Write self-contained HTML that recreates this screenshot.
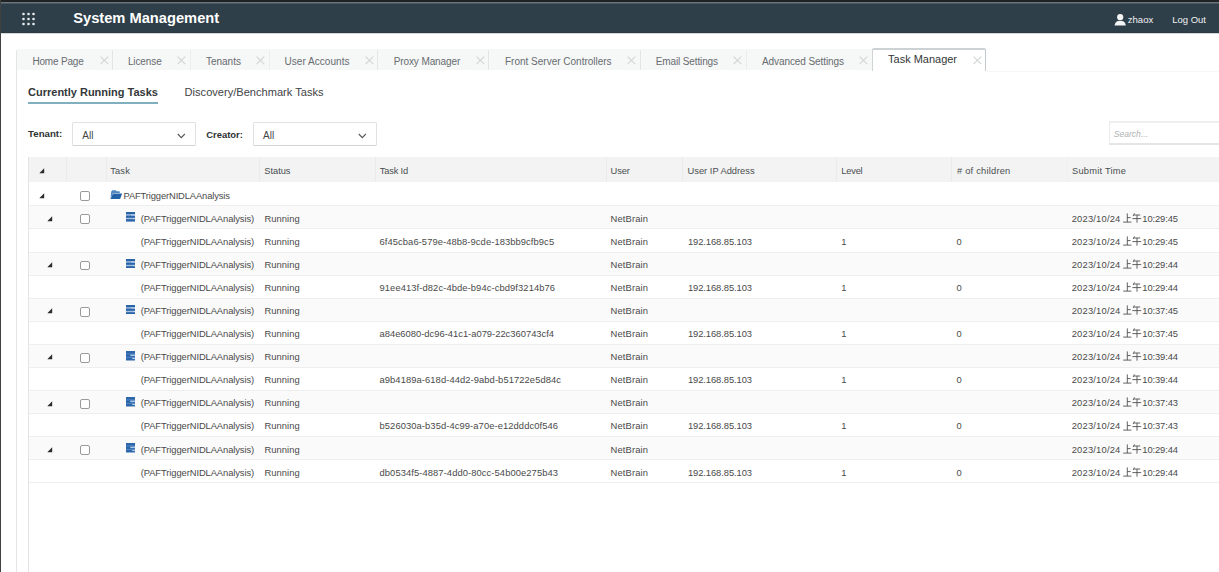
<!DOCTYPE html>
<html><head><meta charset="utf-8"><style>
html,body{margin:0;padding:0;width:1219px;height:572px;overflow:hidden;background:#fff}
.t{position:absolute;white-space:nowrap;line-height:1;font-family:"Liberation Sans",sans-serif}
.r{position:absolute}
</style></head><body>
<div class="r" style="left:0px;top:0px;width:1219px;height:2px;background:#212223;"></div>
<div class="r" style="left:0px;top:2px;width:1219px;height:1px;background:#6a767b;"></div>
<div class="r" style="left:0px;top:3px;width:1219px;height:1px;background:#4b5960;"></div>
<div class="r" style="left:0px;top:4px;width:1219px;height:29px;background:#2f3f49;"></div>
<div class="r" style="left:0px;top:32px;width:1219px;height:1px;background:#2c3a42;"></div>
<div class="r" style="left:0px;top:33px;width:1219px;height:1px;background:#d3d8db;"></div>
<div class="r" style="left:0px;top:0px;width:1.2px;height:572px;background:#424242;"></div>
<svg class="r" style="left:0;top:0" width="60" height="34"><circle cx="23.5" cy="14" r="1.3" fill="#e9edef"/><circle cx="23.5" cy="19" r="1.3" fill="#e9edef"/><circle cx="23.5" cy="24" r="1.3" fill="#e9edef"/><circle cx="28.5" cy="14" r="1.3" fill="#e9edef"/><circle cx="28.5" cy="19" r="1.3" fill="#e9edef"/><circle cx="28.5" cy="24" r="1.3" fill="#e9edef"/><circle cx="33.5" cy="14" r="1.3" fill="#e9edef"/><circle cx="33.5" cy="19" r="1.3" fill="#e9edef"/><circle cx="33.5" cy="24" r="1.3" fill="#e9edef"/></svg>
<div class="t" style="left:73.20px;top:10.77px;font-size:14.68px;color:#ffffff;font-weight:bold;">System Management</div>
<svg class="r" style="left:1114px;top:14px" width="13" height="12" viewBox="0 0 13 12"><circle cx="6.2" cy="3.2" r="3.1" fill="#f2f4f5"/><path d="M0.6 11.6 C0.8 8.4 2.6 7.0 4.4 6.9 L8.0 6.9 C9.8 7.0 11.6 8.4 11.8 11.6 Z" fill="#f2f4f5"/></svg>
<div class="t" style="left:1127.80px;top:15.34px;font-size:9.52px;color:#f0f2f3;">zhaox</div>
<div class="t" style="left:1172.30px;top:15.38px;font-size:9.47px;color:#f0f2f3;">Log Out</div>
<div class="r" style="left:16.4px;top:48.6px;width:969px;height:21.6px;background:#f6f7f7;border-top-left-radius:3px;"></div>
<div class="r" style="left:16.4px;top:49.5px;width:1px;height:21px;background:#e3e5e6;"></div>
<div class="r" style="left:112.4px;top:49.5px;width:1px;height:20.5px;background:#e3e5e6;"></div>
<div class="r" style="left:377.4px;top:49.5px;width:1px;height:20.5px;background:#e3e5e6;"></div>
<div class="r" style="left:488.3px;top:49.5px;width:1px;height:20.5px;background:#e3e5e6;"></div>
<div class="r" style="left:639.5px;top:49.5px;width:1px;height:20.5px;background:#e3e5e6;"></div>
<div class="r" style="left:189.9px;top:49.5px;width:1px;height:20.5px;background:#eceeee;"></div>
<div class="r" style="left:268.5px;top:49.5px;width:1px;height:20.5px;background:#eceeee;"></div>
<div class="r" style="left:745.6px;top:49.5px;width:1px;height:20.5px;background:#eceeee;"></div>
<div class="t" style="left:32.40px;top:56.73px;font-size:10.0px;color:#686c6f;letter-spacing:-0.177px;">Home Page</div>
<svg class="r" style="left:99.6px;top:56.3px" width="9" height="9" viewBox="0 0 9 9"><path d="M0.6 0.6 L8.2 8.2 M8.2 0.6 L0.6 8.2" stroke="#d3d5d6" stroke-width="1.15"/></svg>
<div class="t" style="left:127.90px;top:56.73px;font-size:10.0px;color:#686c6f;letter-spacing:-0.111px;">License</div>
<svg class="r" style="left:176.6px;top:56.3px" width="9" height="9" viewBox="0 0 9 9"><path d="M0.6 0.6 L8.2 8.2 M8.2 0.6 L0.6 8.2" stroke="#d3d5d6" stroke-width="1.15"/></svg>
<div class="t" style="left:206.00px;top:56.73px;font-size:10.0px;color:#686c6f;letter-spacing:-0.022px;">Tenants</div>
<svg class="r" style="left:255.8px;top:56.3px" width="9" height="9" viewBox="0 0 9 9"><path d="M0.6 0.6 L8.2 8.2 M8.2 0.6 L0.6 8.2" stroke="#d3d5d6" stroke-width="1.15"/></svg>
<div class="t" style="left:284.50px;top:56.73px;font-size:10.0px;color:#686c6f;letter-spacing:0.043px;">User Accounts</div>
<svg class="r" style="left:365.0px;top:56.3px" width="9" height="9" viewBox="0 0 9 9"><path d="M0.6 0.6 L8.2 8.2 M8.2 0.6 L0.6 8.2" stroke="#d3d5d6" stroke-width="1.15"/></svg>
<div class="t" style="left:393.70px;top:56.73px;font-size:10.0px;color:#686c6f;letter-spacing:-0.101px;">Proxy Manager</div>
<svg class="r" style="left:475.6px;top:56.3px" width="9" height="9" viewBox="0 0 9 9"><path d="M0.6 0.6 L8.2 8.2 M8.2 0.6 L0.6 8.2" stroke="#d3d5d6" stroke-width="1.15"/></svg>
<div class="t" style="left:505.00px;top:56.73px;font-size:10.0px;color:#686c6f;letter-spacing:-0.004px;">Front Server Controllers</div>
<svg class="r" style="left:626.8px;top:56.3px" width="9" height="9" viewBox="0 0 9 9"><path d="M0.6 0.6 L8.2 8.2 M8.2 0.6 L0.6 8.2" stroke="#d3d5d6" stroke-width="1.15"/></svg>
<div class="t" style="left:655.80px;top:56.73px;font-size:10.0px;color:#686c6f;letter-spacing:-0.132px;">Email Settings</div>
<svg class="r" style="left:732.8px;top:56.3px" width="9" height="9" viewBox="0 0 9 9"><path d="M0.6 0.6 L8.2 8.2 M8.2 0.6 L0.6 8.2" stroke="#d3d5d6" stroke-width="1.15"/></svg>
<div class="t" style="left:762.00px;top:56.73px;font-size:10.0px;color:#686c6f;letter-spacing:-0.087px;">Advanced Settings</div>
<svg class="r" style="left:859.2px;top:56.3px" width="9" height="9" viewBox="0 0 9 9"><path d="M0.6 0.6 L8.2 8.2 M8.2 0.6 L0.6 8.2" stroke="#d3d5d6" stroke-width="1.15"/></svg>
<div class="r" style="left:872px;top:48px;width:114px;height:23px;background:#ffffff;"></div>
<div class="r" style="left:872px;top:48px;width:113.5px;height:2px;background:#ccd1d4;border-top-left-radius:2px;border-top-right-radius:2px;"></div>
<div class="r" style="left:872px;top:49px;width:1px;height:22px;background:#cfd4d7;"></div>
<div class="r" style="left:984.8px;top:49px;width:1.5px;height:21.5px;background:#c3c9cc;"></div>
<div class="t" style="left:888.10px;top:54.11px;font-size:10.97px;color:#333638;">Task Manager</div>
<svg class="r" style="left:972.6px;top:56.2px" width="9" height="9" viewBox="0 0 9 9"><path d="M0.6 0.6 L8.2 8.2 M8.2 0.6 L0.6 8.2" stroke="#d3d5d6" stroke-width="1.15"/></svg>
<div class="r" style="left:986px;top:70.5px;width:233px;height:1px;background:#f6f6f6;"></div>
<div class="r" style="left:16.3px;top:70px;width:1px;height:502px;background:#e5e5e5;"></div>
<div class="t" style="left:28.10px;top:87.00px;font-size:10.99px;color:#33373a;font-weight:bold;">Currently Running Tasks</div>
<div class="r" style="left:28px;top:101.6px;width:130.2px;height:2px;background:#80afbd;"></div>
<div class="t" style="left:184.60px;top:87.11px;font-size:11.09px;color:#3f4346;">Discovery/Benchmark Tasks</div>
<div class="t" style="left:28.10px;top:129.41px;font-size:9.67px;color:#2d3134;font-weight:bold;">Tenant:</div>
<div class="r" style="left:72.1px;top:122.4px;width:123.6px;height:23.4px;background:#fff;box-sizing:border-box;border:1px solid #e0e1e2;border-bottom-color:#d2d4d5;border-radius:1.5px;"></div>
<div class="t" style="left:82.30px;top:130.94px;font-size:9.99px;color:#444;">All</div>
<svg class="r" style="left:176.9px;top:132.8px" width="9" height="6" viewBox="0 0 9 6"><path d="M0.8 1 L4.3 4.6 L7.8 1" stroke="#555" stroke-width="1.1" fill="none"/></svg>
<div class="t" style="left:206.20px;top:129.61px;font-size:9.44px;color:#2d3134;font-weight:bold;">Creator:</div>
<div class="r" style="left:253.2px;top:122.4px;width:123.4px;height:23.4px;background:#fff;box-sizing:border-box;border:1px solid #e0e1e2;border-bottom-color:#d2d4d5;border-radius:1.5px;"></div>
<div class="t" style="left:263.10px;top:130.94px;font-size:9.99px;color:#444;">All</div>
<svg class="r" style="left:357.8px;top:132.8px" width="9" height="6" viewBox="0 0 9 6"><path d="M0.8 1 L4.3 4.6 L7.8 1" stroke="#555" stroke-width="1.1" fill="none"/></svg>
<div class="r" style="left:1108.8px;top:121.1px;width:120px;height:24.3px;background:#fff;box-sizing:border-box;border:1px solid #ebebeb;border-top:2px solid #efefef;border-bottom:2px solid #e5e5e5;"></div>
<div class="t" style="left:1113.80px;top:130.46px;font-size:8.55px;color:#b0b2b4;font-style:italic;">Search...</div>
<div class="r" style="left:28.3px;top:157.2px;width:1190.7px;height:24.5px;background:#f3f3f3;"></div>
<div class="r" style="left:66.2px;top:157.2px;width:1px;height:24.5px;background:#ebebeb;"></div>
<div class="r" style="left:106.0px;top:157.2px;width:1px;height:24.5px;background:#ebebeb;"></div>
<div class="r" style="left:259.4px;top:157.2px;width:1px;height:24.5px;background:#ebebeb;"></div>
<div class="r" style="left:374.5px;top:157.2px;width:1px;height:24.5px;background:#ebebeb;"></div>
<div class="r" style="left:605.6px;top:157.2px;width:1px;height:24.5px;background:#ebebeb;"></div>
<div class="r" style="left:682.2px;top:157.2px;width:1px;height:24.5px;background:#ebebeb;"></div>
<div class="r" style="left:836.4px;top:157.2px;width:1px;height:24.5px;background:#ebebeb;"></div>
<div class="r" style="left:951.3px;top:157.2px;width:1px;height:24.5px;background:#ebebeb;"></div>
<div class="r" style="left:1066.9px;top:157.2px;width:1px;height:24.5px;background:#efefef;"></div>
<svg class="r" style="left:38.8px;top:168.0px" width="6" height="6" viewBox="0 0 6 6"><path d="M5.2 0.3 L5.2 5.2 L0.3 5.2 Z" fill="#2b2b2b"/></svg>
<div class="t" style="left:110.30px;top:167.13px;font-size:9.3px;color:#4a4e51;letter-spacing:0.125px;">Task</div>
<div class="t" style="left:264.30px;top:167.13px;font-size:9.3px;color:#4a4e51;letter-spacing:-0.032px;">Status</div>
<div class="t" style="left:379.80px;top:167.13px;font-size:9.3px;color:#4a4e51;letter-spacing:-0.176px;">Task Id</div>
<div class="t" style="left:610.50px;top:167.13px;font-size:9.3px;color:#4a4e51;letter-spacing:-0.080px;">User</div>
<div class="t" style="left:687.60px;top:167.13px;font-size:9.3px;color:#4a4e51;letter-spacing:-0.001px;">User IP Address</div>
<div class="t" style="left:841.30px;top:167.13px;font-size:9.3px;color:#4a4e51;letter-spacing:-0.209px;">Level</div>
<div class="t" style="left:957.00px;top:167.13px;font-size:9.3px;color:#4a4e51;letter-spacing:0.220px;"># of children</div>
<div class="t" style="left:1072.00px;top:167.13px;font-size:9.3px;color:#4a4e51;letter-spacing:0.223px;">Submit Time</div>
<div class="r" style="left:29.3px;top:181.7px;width:1189.7px;height:23.700000000000017px;background:#ffffff;"></div>
<div class="r" style="left:29.3px;top:205.4px;width:1189.7px;height:1px;background:#eeeeee;"></div>
<svg class="r" style="left:38.8px;top:192.8px" width="6" height="6" viewBox="0 0 6 6"><path d="M5.2 0.3 L5.2 5.2 L0.3 5.2 Z" fill="#2b2b2b"/></svg>
<div class="r" style="left:80.1px;top:191.30px;width:9.6px;height:9.8px;box-sizing:border-box;border:1px solid #9a9a9a;border-radius:2px;background:#fff"></div>
<svg class="r" style="left:109.6px;top:189.90px" width="12.5" height="10" viewBox="0 0 12.5 10"><path d="M0.5 9.0 L1.2 1.6 Q1.3 0.9 1.9 0.9 L2.1 0.2 L6.0 0.2 L6.5 1.2 L9.6 1.2 L9.9 3.0 L3.0 3.0 Z" fill="#5088c4"/><path d="M3.0 3.5 L12.2 3.5 L10.1 9.1 L0.5 9.1 Z" fill="#2463a7"/></svg>
<div class="t" style="left:123.50px;top:190.64px;font-size:9.4px;color:#4a4a4a;letter-spacing:-0.137px;">PAFTriggerNIDLAAnalysis</div>
<div class="r" style="left:29.3px;top:206.40000000000003px;width:1189.7px;height:22.079999999999984px;background:#fafafa;"></div>
<div class="r" style="left:29.3px;top:228.48000000000002px;width:1189.7px;height:1px;background:#eeeeee;"></div>
<svg class="r" style="left:46.5px;top:215.88000000000002px" width="6" height="6" viewBox="0 0 6 6"><path d="M5.2 0.3 L5.2 5.2 L0.3 5.2 Z" fill="#2b2b2b"/></svg>
<div class="r" style="left:80.1px;top:214.48px;width:9.6px;height:9.8px;box-sizing:border-box;border:1px solid #9a9a9a;border-radius:2px;background:#fff"></div>
<svg class="r" style="left:125.5px;top:212.48px" width="9.5" height="9.6" viewBox="0 0 9.5 9.6"><rect x="0" y="0" width="9.4" height="9.5" fill="#a4bfe0"/><rect x="0" y="0" width="9.4" height="2.2" fill="#2a64a8"/><rect x="0" y="3.6" width="9.4" height="2.2" fill="#2a64a8"/><rect x="0" y="7.2" width="9.4" height="2.3" fill="#2a64a8"/><rect x="5.2" y="2.4" width="4.2" height="1.15" fill="#b9d0ea"/><rect x="6.8" y="5.95" width="2.6" height="1.15" fill="#b9d0ea"/></svg>
<div class="t" style="left:140.70px;top:213.72px;font-size:9.4px;color:#4a4a4a;letter-spacing:-0.090px;">(PAFTriggerNIDLAAnalysis)</div>
<div class="t" style="left:264.40px;top:213.72px;font-size:9.4px;color:#4a4a4a;letter-spacing:0.077px;">Running</div>
<div class="t" style="left:610.60px;top:213.72px;font-size:9.4px;color:#4a4a4a;letter-spacing:0.131px;">NetBrain</div>
<div class="t" style="left:1071.70px;top:213.72px;font-size:9.4px;color:#4a4a4a;letter-spacing:0.186px;">2023/10/24</div>
<svg class="r" style="left:1123.00px;top:212.78px" width="19" height="10" viewBox="0 0 19 10"><g stroke="#505050" stroke-width="0.9" fill="none"><path d="M4.3 0.4 V9.1 M4.3 4.6 H7.6 M0.2 9.1 H8.4"/><path d="M11.4 0.3 L10.2 3.0 M10.9 2.0 H17.2 M9.4 5.6 H18.2 M14.0 2.0 V9.7"/></g></svg>
<div class="t" style="left:1142.30px;top:213.72px;font-size:9.4px;color:#4a4a4a;letter-spacing:-0.114px;">10:29:45</div>
<div class="r" style="left:29.3px;top:229.48000000000002px;width:1189.7px;height:22.079999999999984px;background:#ffffff;"></div>
<div class="r" style="left:29.3px;top:251.56px;width:1189.7px;height:1px;background:#eeeeee;"></div>
<div class="t" style="left:140.70px;top:236.80px;font-size:9.4px;color:#4a4a4a;letter-spacing:-0.090px;">(PAFTriggerNIDLAAnalysis)</div>
<div class="t" style="left:264.40px;top:236.80px;font-size:9.4px;color:#4a4a4a;letter-spacing:0.077px;">Running</div>
<div class="t" style="left:379.50px;top:236.80px;font-size:9.4px;color:#4a4a4a;letter-spacing:0.074px;">6f45cba6-579e-48b8-9cde-183bb9cfb9c5</div>
<div class="t" style="left:610.60px;top:236.80px;font-size:9.4px;color:#4a4a4a;letter-spacing:0.131px;">NetBrain</div>
<div class="t" style="left:687.90px;top:236.80px;font-size:9.4px;color:#4a4a4a;letter-spacing:-0.075px;">192.168.85.103</div>
<div class="t" style="left:841.20px;top:236.80px;font-size:9.4px;color:#4a4a4a;">1</div>
<div class="t" style="left:956.50px;top:236.80px;font-size:9.4px;color:#4a4a4a;">0</div>
<div class="t" style="left:1071.70px;top:236.80px;font-size:9.4px;color:#4a4a4a;letter-spacing:0.186px;">2023/10/24</div>
<svg class="r" style="left:1123.00px;top:235.86px" width="19" height="10" viewBox="0 0 19 10"><g stroke="#505050" stroke-width="0.9" fill="none"><path d="M4.3 0.4 V9.1 M4.3 4.6 H7.6 M0.2 9.1 H8.4"/><path d="M11.4 0.3 L10.2 3.0 M10.9 2.0 H17.2 M9.4 5.6 H18.2 M14.0 2.0 V9.7"/></g></svg>
<div class="t" style="left:1142.30px;top:236.80px;font-size:9.4px;color:#4a4a4a;letter-spacing:-0.114px;">10:29:45</div>
<div class="r" style="left:29.3px;top:252.56px;width:1189.7px;height:22.079999999999984px;background:#fafafa;"></div>
<div class="r" style="left:29.3px;top:274.64px;width:1189.7px;height:1px;background:#eeeeee;"></div>
<svg class="r" style="left:46.5px;top:262.03999999999996px" width="6" height="6" viewBox="0 0 6 6"><path d="M5.2 0.3 L5.2 5.2 L0.3 5.2 Z" fill="#2b2b2b"/></svg>
<div class="r" style="left:80.1px;top:260.64px;width:9.6px;height:9.8px;box-sizing:border-box;border:1px solid #9a9a9a;border-radius:2px;background:#fff"></div>
<svg class="r" style="left:125.5px;top:258.64px" width="9.5" height="9.6" viewBox="0 0 9.5 9.6"><rect x="0" y="0" width="9.4" height="9.5" fill="#a4bfe0"/><rect x="0" y="0" width="9.4" height="2.2" fill="#2a64a8"/><rect x="0" y="3.6" width="9.4" height="2.2" fill="#2a64a8"/><rect x="0" y="7.2" width="9.4" height="2.3" fill="#2a64a8"/><rect x="5.2" y="2.4" width="4.2" height="1.15" fill="#b9d0ea"/><rect x="6.8" y="5.95" width="2.6" height="1.15" fill="#b9d0ea"/></svg>
<div class="t" style="left:140.70px;top:259.88px;font-size:9.4px;color:#4a4a4a;letter-spacing:-0.090px;">(PAFTriggerNIDLAAnalysis)</div>
<div class="t" style="left:264.40px;top:259.88px;font-size:9.4px;color:#4a4a4a;letter-spacing:0.077px;">Running</div>
<div class="t" style="left:610.60px;top:259.88px;font-size:9.4px;color:#4a4a4a;letter-spacing:0.131px;">NetBrain</div>
<div class="t" style="left:1071.70px;top:259.88px;font-size:9.4px;color:#4a4a4a;letter-spacing:0.186px;">2023/10/24</div>
<svg class="r" style="left:1123.00px;top:258.94px" width="19" height="10" viewBox="0 0 19 10"><g stroke="#505050" stroke-width="0.9" fill="none"><path d="M4.3 0.4 V9.1 M4.3 4.6 H7.6 M0.2 9.1 H8.4"/><path d="M11.4 0.3 L10.2 3.0 M10.9 2.0 H17.2 M9.4 5.6 H18.2 M14.0 2.0 V9.7"/></g></svg>
<div class="t" style="left:1142.30px;top:259.88px;font-size:9.4px;color:#4a4a4a;letter-spacing:-0.114px;">10:29:44</div>
<div class="r" style="left:29.3px;top:275.64000000000004px;width:1189.7px;height:22.079999999999984px;background:#ffffff;"></div>
<div class="r" style="left:29.3px;top:297.72px;width:1189.7px;height:1px;background:#eeeeee;"></div>
<div class="t" style="left:140.70px;top:282.96px;font-size:9.4px;color:#4a4a4a;letter-spacing:-0.090px;">(PAFTriggerNIDLAAnalysis)</div>
<div class="t" style="left:264.40px;top:282.96px;font-size:9.4px;color:#4a4a4a;letter-spacing:0.077px;">Running</div>
<div class="t" style="left:379.50px;top:282.96px;font-size:9.4px;color:#4a4a4a;letter-spacing:0.087px;">91ee413f-d82c-4bde-b94c-cbd9f3214b76</div>
<div class="t" style="left:610.60px;top:282.96px;font-size:9.4px;color:#4a4a4a;letter-spacing:0.131px;">NetBrain</div>
<div class="t" style="left:687.90px;top:282.96px;font-size:9.4px;color:#4a4a4a;letter-spacing:-0.075px;">192.168.85.103</div>
<div class="t" style="left:841.20px;top:282.96px;font-size:9.4px;color:#4a4a4a;">1</div>
<div class="t" style="left:956.50px;top:282.96px;font-size:9.4px;color:#4a4a4a;">0</div>
<div class="t" style="left:1071.70px;top:282.96px;font-size:9.4px;color:#4a4a4a;letter-spacing:0.186px;">2023/10/24</div>
<svg class="r" style="left:1123.00px;top:282.02px" width="19" height="10" viewBox="0 0 19 10"><g stroke="#505050" stroke-width="0.9" fill="none"><path d="M4.3 0.4 V9.1 M4.3 4.6 H7.6 M0.2 9.1 H8.4"/><path d="M11.4 0.3 L10.2 3.0 M10.9 2.0 H17.2 M9.4 5.6 H18.2 M14.0 2.0 V9.7"/></g></svg>
<div class="t" style="left:1142.30px;top:282.96px;font-size:9.4px;color:#4a4a4a;letter-spacing:-0.114px;">10:29:44</div>
<div class="r" style="left:29.3px;top:298.72px;width:1189.7px;height:22.079999999999984px;background:#fafafa;"></div>
<div class="r" style="left:29.3px;top:320.8px;width:1189.7px;height:1px;background:#eeeeee;"></div>
<svg class="r" style="left:46.5px;top:308.2px" width="6" height="6" viewBox="0 0 6 6"><path d="M5.2 0.3 L5.2 5.2 L0.3 5.2 Z" fill="#2b2b2b"/></svg>
<div class="r" style="left:80.1px;top:306.80px;width:9.6px;height:9.8px;box-sizing:border-box;border:1px solid #9a9a9a;border-radius:2px;background:#fff"></div>
<svg class="r" style="left:125.5px;top:304.80px" width="9.5" height="9.6" viewBox="0 0 9.5 9.6"><rect x="0" y="0" width="9.4" height="9.5" fill="#a4bfe0"/><rect x="0" y="0" width="9.4" height="2.2" fill="#2a64a8"/><rect x="0" y="3.6" width="9.4" height="2.2" fill="#2a64a8"/><rect x="0" y="7.2" width="9.4" height="2.3" fill="#2a64a8"/><rect x="5.2" y="2.4" width="4.2" height="1.15" fill="#b9d0ea"/><rect x="6.8" y="5.95" width="2.6" height="1.15" fill="#b9d0ea"/></svg>
<div class="t" style="left:140.70px;top:306.04px;font-size:9.4px;color:#4a4a4a;letter-spacing:-0.090px;">(PAFTriggerNIDLAAnalysis)</div>
<div class="t" style="left:264.40px;top:306.04px;font-size:9.4px;color:#4a4a4a;letter-spacing:0.077px;">Running</div>
<div class="t" style="left:610.60px;top:306.04px;font-size:9.4px;color:#4a4a4a;letter-spacing:0.131px;">NetBrain</div>
<div class="t" style="left:1071.70px;top:306.04px;font-size:9.4px;color:#4a4a4a;letter-spacing:0.186px;">2023/10/24</div>
<svg class="r" style="left:1123.00px;top:305.10px" width="19" height="10" viewBox="0 0 19 10"><g stroke="#505050" stroke-width="0.9" fill="none"><path d="M4.3 0.4 V9.1 M4.3 4.6 H7.6 M0.2 9.1 H8.4"/><path d="M11.4 0.3 L10.2 3.0 M10.9 2.0 H17.2 M9.4 5.6 H18.2 M14.0 2.0 V9.7"/></g></svg>
<div class="t" style="left:1142.30px;top:306.04px;font-size:9.4px;color:#4a4a4a;letter-spacing:-0.114px;">10:37:45</div>
<div class="r" style="left:29.3px;top:321.8px;width:1189.7px;height:22.079999999999984px;background:#ffffff;"></div>
<div class="r" style="left:29.3px;top:343.88px;width:1189.7px;height:1px;background:#eeeeee;"></div>
<div class="t" style="left:140.70px;top:329.12px;font-size:9.4px;color:#4a4a4a;letter-spacing:-0.090px;">(PAFTriggerNIDLAAnalysis)</div>
<div class="t" style="left:264.40px;top:329.12px;font-size:9.4px;color:#4a4a4a;letter-spacing:0.077px;">Running</div>
<div class="t" style="left:379.50px;top:329.12px;font-size:9.4px;color:#4a4a4a;letter-spacing:-0.001px;">a84e6080-dc96-41c1-a079-22c360743cf4</div>
<div class="t" style="left:610.60px;top:329.12px;font-size:9.4px;color:#4a4a4a;letter-spacing:0.131px;">NetBrain</div>
<div class="t" style="left:687.90px;top:329.12px;font-size:9.4px;color:#4a4a4a;letter-spacing:-0.075px;">192.168.85.103</div>
<div class="t" style="left:841.20px;top:329.12px;font-size:9.4px;color:#4a4a4a;">1</div>
<div class="t" style="left:956.50px;top:329.12px;font-size:9.4px;color:#4a4a4a;">0</div>
<div class="t" style="left:1071.70px;top:329.12px;font-size:9.4px;color:#4a4a4a;letter-spacing:0.186px;">2023/10/24</div>
<svg class="r" style="left:1123.00px;top:328.18px" width="19" height="10" viewBox="0 0 19 10"><g stroke="#505050" stroke-width="0.9" fill="none"><path d="M4.3 0.4 V9.1 M4.3 4.6 H7.6 M0.2 9.1 H8.4"/><path d="M11.4 0.3 L10.2 3.0 M10.9 2.0 H17.2 M9.4 5.6 H18.2 M14.0 2.0 V9.7"/></g></svg>
<div class="t" style="left:1142.30px;top:329.12px;font-size:9.4px;color:#4a4a4a;letter-spacing:-0.114px;">10:37:45</div>
<div class="r" style="left:29.3px;top:344.88000000000005px;width:1189.7px;height:22.079999999999984px;background:#fafafa;"></div>
<div class="r" style="left:29.3px;top:366.96000000000004px;width:1189.7px;height:1px;background:#eeeeee;"></div>
<svg class="r" style="left:46.5px;top:354.36px" width="6" height="6" viewBox="0 0 6 6"><path d="M5.2 0.3 L5.2 5.2 L0.3 5.2 Z" fill="#2b2b2b"/></svg>
<div class="r" style="left:80.1px;top:352.96px;width:9.6px;height:9.8px;box-sizing:border-box;border:1px solid #9a9a9a;border-radius:2px;background:#fff"></div>
<svg class="r" style="left:125.5px;top:350.96px" width="9.5" height="9.6" viewBox="0 0 9.5 9.6"><rect x="0" y="0" width="9.4" height="9.5" fill="#2d67ab"/><rect x="0" y="2.5" width="9.4" height="0.8" fill="#5a8ac2"/><rect x="0" y="6.0" width="9.4" height="0.8" fill="#5a8ac2"/><rect x="4.3" y="3.6" width="5.1" height="1.5" fill="#a9c6e6"/><rect x="6.2" y="6.8" width="3.2" height="1.3" fill="#a9c6e6"/></svg>
<div class="t" style="left:140.70px;top:352.20px;font-size:9.4px;color:#4a4a4a;letter-spacing:-0.090px;">(PAFTriggerNIDLAAnalysis)</div>
<div class="t" style="left:264.40px;top:352.20px;font-size:9.4px;color:#4a4a4a;letter-spacing:0.077px;">Running</div>
<div class="t" style="left:610.60px;top:352.20px;font-size:9.4px;color:#4a4a4a;letter-spacing:0.131px;">NetBrain</div>
<div class="t" style="left:1071.70px;top:352.20px;font-size:9.4px;color:#4a4a4a;letter-spacing:0.186px;">2023/10/24</div>
<svg class="r" style="left:1123.00px;top:351.26px" width="19" height="10" viewBox="0 0 19 10"><g stroke="#505050" stroke-width="0.9" fill="none"><path d="M4.3 0.4 V9.1 M4.3 4.6 H7.6 M0.2 9.1 H8.4"/><path d="M11.4 0.3 L10.2 3.0 M10.9 2.0 H17.2 M9.4 5.6 H18.2 M14.0 2.0 V9.7"/></g></svg>
<div class="t" style="left:1142.30px;top:352.20px;font-size:9.4px;color:#4a4a4a;letter-spacing:-0.114px;">10:39:44</div>
<div class="r" style="left:29.3px;top:367.96px;width:1189.7px;height:22.079999999999984px;background:#ffffff;"></div>
<div class="r" style="left:29.3px;top:390.03999999999996px;width:1189.7px;height:1px;background:#eeeeee;"></div>
<div class="t" style="left:140.70px;top:375.28px;font-size:9.4px;color:#4a4a4a;letter-spacing:-0.090px;">(PAFTriggerNIDLAAnalysis)</div>
<div class="t" style="left:264.40px;top:375.28px;font-size:9.4px;color:#4a4a4a;letter-spacing:0.077px;">Running</div>
<div class="t" style="left:379.50px;top:375.28px;font-size:9.4px;color:#4a4a4a;letter-spacing:0.077px;">a9b4189a-618d-44d2-9abd-b51722e5d84c</div>
<div class="t" style="left:610.60px;top:375.28px;font-size:9.4px;color:#4a4a4a;letter-spacing:0.131px;">NetBrain</div>
<div class="t" style="left:687.90px;top:375.28px;font-size:9.4px;color:#4a4a4a;letter-spacing:-0.075px;">192.168.85.103</div>
<div class="t" style="left:841.20px;top:375.28px;font-size:9.4px;color:#4a4a4a;">1</div>
<div class="t" style="left:956.50px;top:375.28px;font-size:9.4px;color:#4a4a4a;">0</div>
<div class="t" style="left:1071.70px;top:375.28px;font-size:9.4px;color:#4a4a4a;letter-spacing:0.186px;">2023/10/24</div>
<svg class="r" style="left:1123.00px;top:374.34px" width="19" height="10" viewBox="0 0 19 10"><g stroke="#505050" stroke-width="0.9" fill="none"><path d="M4.3 0.4 V9.1 M4.3 4.6 H7.6 M0.2 9.1 H8.4"/><path d="M11.4 0.3 L10.2 3.0 M10.9 2.0 H17.2 M9.4 5.6 H18.2 M14.0 2.0 V9.7"/></g></svg>
<div class="t" style="left:1142.30px;top:375.28px;font-size:9.4px;color:#4a4a4a;letter-spacing:-0.114px;">10:39:44</div>
<div class="r" style="left:29.3px;top:391.04px;width:1189.7px;height:22.079999999999984px;background:#fafafa;"></div>
<div class="r" style="left:29.3px;top:413.12px;width:1189.7px;height:1px;background:#eeeeee;"></div>
<svg class="r" style="left:46.5px;top:400.52px" width="6" height="6" viewBox="0 0 6 6"><path d="M5.2 0.3 L5.2 5.2 L0.3 5.2 Z" fill="#2b2b2b"/></svg>
<div class="r" style="left:80.1px;top:399.12px;width:9.6px;height:9.8px;box-sizing:border-box;border:1px solid #9a9a9a;border-radius:2px;background:#fff"></div>
<svg class="r" style="left:125.5px;top:397.12px" width="9.5" height="9.6" viewBox="0 0 9.5 9.6"><rect x="0" y="0" width="9.4" height="9.5" fill="#2d67ab"/><rect x="0" y="2.5" width="9.4" height="0.8" fill="#5a8ac2"/><rect x="0" y="6.0" width="9.4" height="0.8" fill="#5a8ac2"/><rect x="4.3" y="3.6" width="5.1" height="1.5" fill="#a9c6e6"/><rect x="6.2" y="6.8" width="3.2" height="1.3" fill="#a9c6e6"/></svg>
<div class="t" style="left:140.70px;top:398.36px;font-size:9.4px;color:#4a4a4a;letter-spacing:-0.090px;">(PAFTriggerNIDLAAnalysis)</div>
<div class="t" style="left:264.40px;top:398.36px;font-size:9.4px;color:#4a4a4a;letter-spacing:0.077px;">Running</div>
<div class="t" style="left:610.60px;top:398.36px;font-size:9.4px;color:#4a4a4a;letter-spacing:0.131px;">NetBrain</div>
<div class="t" style="left:1071.70px;top:398.36px;font-size:9.4px;color:#4a4a4a;letter-spacing:0.186px;">2023/10/24</div>
<svg class="r" style="left:1123.00px;top:397.42px" width="19" height="10" viewBox="0 0 19 10"><g stroke="#505050" stroke-width="0.9" fill="none"><path d="M4.3 0.4 V9.1 M4.3 4.6 H7.6 M0.2 9.1 H8.4"/><path d="M11.4 0.3 L10.2 3.0 M10.9 2.0 H17.2 M9.4 5.6 H18.2 M14.0 2.0 V9.7"/></g></svg>
<div class="t" style="left:1142.30px;top:398.36px;font-size:9.4px;color:#4a4a4a;letter-spacing:-0.114px;">10:37:43</div>
<div class="r" style="left:29.3px;top:414.12px;width:1189.7px;height:22.079999999999984px;background:#ffffff;"></div>
<div class="r" style="left:29.3px;top:436.2px;width:1189.7px;height:1px;background:#eeeeee;"></div>
<div class="t" style="left:140.70px;top:421.44px;font-size:9.4px;color:#4a4a4a;letter-spacing:-0.090px;">(PAFTriggerNIDLAAnalysis)</div>
<div class="t" style="left:264.40px;top:421.44px;font-size:9.4px;color:#4a4a4a;letter-spacing:0.077px;">Running</div>
<div class="t" style="left:379.50px;top:421.44px;font-size:9.4px;color:#4a4a4a;letter-spacing:0.081px;">b526030a-b35d-4c99-a70e-e12dddc0f546</div>
<div class="t" style="left:610.60px;top:421.44px;font-size:9.4px;color:#4a4a4a;letter-spacing:0.131px;">NetBrain</div>
<div class="t" style="left:687.90px;top:421.44px;font-size:9.4px;color:#4a4a4a;letter-spacing:-0.075px;">192.168.85.103</div>
<div class="t" style="left:841.20px;top:421.44px;font-size:9.4px;color:#4a4a4a;">1</div>
<div class="t" style="left:956.50px;top:421.44px;font-size:9.4px;color:#4a4a4a;">0</div>
<div class="t" style="left:1071.70px;top:421.44px;font-size:9.4px;color:#4a4a4a;letter-spacing:0.186px;">2023/10/24</div>
<svg class="r" style="left:1123.00px;top:420.50px" width="19" height="10" viewBox="0 0 19 10"><g stroke="#505050" stroke-width="0.9" fill="none"><path d="M4.3 0.4 V9.1 M4.3 4.6 H7.6 M0.2 9.1 H8.4"/><path d="M11.4 0.3 L10.2 3.0 M10.9 2.0 H17.2 M9.4 5.6 H18.2 M14.0 2.0 V9.7"/></g></svg>
<div class="t" style="left:1142.30px;top:421.44px;font-size:9.4px;color:#4a4a4a;letter-spacing:-0.114px;">10:37:43</div>
<div class="r" style="left:29.3px;top:437.2px;width:1189.7px;height:22.079999999999984px;background:#fafafa;"></div>
<div class="r" style="left:29.3px;top:459.28px;width:1189.7px;height:1px;background:#eeeeee;"></div>
<svg class="r" style="left:46.5px;top:446.67999999999995px" width="6" height="6" viewBox="0 0 6 6"><path d="M5.2 0.3 L5.2 5.2 L0.3 5.2 Z" fill="#2b2b2b"/></svg>
<div class="r" style="left:80.1px;top:445.28px;width:9.6px;height:9.8px;box-sizing:border-box;border:1px solid #9a9a9a;border-radius:2px;background:#fff"></div>
<svg class="r" style="left:125.5px;top:443.28px" width="9.5" height="9.6" viewBox="0 0 9.5 9.6"><rect x="0" y="0" width="9.4" height="9.5" fill="#2d67ab"/><rect x="0" y="2.5" width="9.4" height="0.8" fill="#5a8ac2"/><rect x="0" y="6.0" width="9.4" height="0.8" fill="#5a8ac2"/><rect x="4.3" y="3.6" width="5.1" height="1.5" fill="#a9c6e6"/><rect x="6.2" y="6.8" width="3.2" height="1.3" fill="#a9c6e6"/></svg>
<div class="t" style="left:140.70px;top:444.52px;font-size:9.4px;color:#4a4a4a;letter-spacing:-0.090px;">(PAFTriggerNIDLAAnalysis)</div>
<div class="t" style="left:264.40px;top:444.52px;font-size:9.4px;color:#4a4a4a;letter-spacing:0.077px;">Running</div>
<div class="t" style="left:610.60px;top:444.52px;font-size:9.4px;color:#4a4a4a;letter-spacing:0.131px;">NetBrain</div>
<div class="t" style="left:1071.70px;top:444.52px;font-size:9.4px;color:#4a4a4a;letter-spacing:0.186px;">2023/10/24</div>
<svg class="r" style="left:1123.00px;top:443.58px" width="19" height="10" viewBox="0 0 19 10"><g stroke="#505050" stroke-width="0.9" fill="none"><path d="M4.3 0.4 V9.1 M4.3 4.6 H7.6 M0.2 9.1 H8.4"/><path d="M11.4 0.3 L10.2 3.0 M10.9 2.0 H17.2 M9.4 5.6 H18.2 M14.0 2.0 V9.7"/></g></svg>
<div class="t" style="left:1142.30px;top:444.52px;font-size:9.4px;color:#4a4a4a;letter-spacing:-0.114px;">10:29:44</div>
<div class="r" style="left:29.3px;top:460.28000000000003px;width:1189.7px;height:22.079999999999984px;background:#ffffff;"></div>
<div class="r" style="left:29.3px;top:482.36px;width:1189.7px;height:1px;background:#eeeeee;"></div>
<div class="t" style="left:140.70px;top:467.60px;font-size:9.4px;color:#4a4a4a;letter-spacing:-0.090px;">(PAFTriggerNIDLAAnalysis)</div>
<div class="t" style="left:264.40px;top:467.60px;font-size:9.4px;color:#4a4a4a;letter-spacing:0.077px;">Running</div>
<div class="t" style="left:379.50px;top:467.60px;font-size:9.4px;color:#4a4a4a;letter-spacing:0.081px;">db0534f5-4887-4dd0-80cc-54b00e275b43</div>
<div class="t" style="left:610.60px;top:467.60px;font-size:9.4px;color:#4a4a4a;letter-spacing:0.131px;">NetBrain</div>
<div class="t" style="left:687.90px;top:467.60px;font-size:9.4px;color:#4a4a4a;letter-spacing:-0.075px;">192.168.85.103</div>
<div class="t" style="left:841.20px;top:467.60px;font-size:9.4px;color:#4a4a4a;">1</div>
<div class="t" style="left:956.50px;top:467.60px;font-size:9.4px;color:#4a4a4a;">0</div>
<div class="t" style="left:1071.70px;top:467.60px;font-size:9.4px;color:#4a4a4a;letter-spacing:0.186px;">2023/10/24</div>
<svg class="r" style="left:1123.00px;top:466.66px" width="19" height="10" viewBox="0 0 19 10"><g stroke="#505050" stroke-width="0.9" fill="none"><path d="M4.3 0.4 V9.1 M4.3 4.6 H7.6 M0.2 9.1 H8.4"/><path d="M11.4 0.3 L10.2 3.0 M10.9 2.0 H17.2 M9.4 5.6 H18.2 M14.0 2.0 V9.7"/></g></svg>
<div class="t" style="left:1142.30px;top:467.60px;font-size:9.4px;color:#4a4a4a;letter-spacing:-0.114px;">10:29:44</div>
<div class="r" style="left:28.3px;top:157.2px;width:1px;height:414.8px;background:#e4e4e4;"></div>

</body></html>
